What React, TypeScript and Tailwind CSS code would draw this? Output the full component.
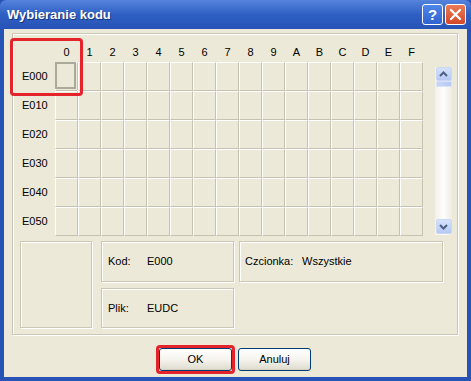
import React from "react";

const cols = ["0", "1", "2", "3", "4", "5", "6", "7", "8", "9", "A", "B", "C", "D", "E", "F"];
const rows = ["E000", "E010", "E020", "E030", "E040", "E050"];

function Etched({ className, children }: { className?: string; children?: React.ReactNode }) {
  return (
    <div
      className={
        "border border-[#cbc7b5] shadow-[inset_1px_1px_0_#ffffff,1px_1px_0_#ffffff] " + (className ?? "")
      }
    >
      {children}
    </div>
  );
}

function XPButton({ label, focus }: { label: string; focus?: boolean }) {
  return (
    <div className="relative">
      <div className="w-[73px] h-[23px] rounded-[3px] border border-[#003c74] bg-gradient-to-b from-[#ffffff] via-[#f5f4ee] to-[#dedbcd] flex items-center justify-center text-[11px] text-black shadow-[inset_0_-1px_0_#d6d0c0]">
        {label}
      </div>
      {focus && (
        <div className="absolute -left-[3px] -top-[3px] w-[79px] h-[29px] rounded-[4px] border-[3px] border-[#e5232b]" />
      )}
    </div>
  );
}

export default function App() {
  return (
    <div className="w-[471px] h-[381px] flex flex-col bg-[#2753b6] font-['Liberation_Sans',Arial,sans-serif] text-black">
      {/* Title bar */}
      <div className="h-[29px] flex items-center pl-[7px] pr-[5px] bg-gradient-to-b from-[#5583dc] via-[#2f5fc3] to-[#2753b6] rounded-t-[6px]">
        <div className="flex-1 text-white font-bold text-[13px] [text-shadow:1px_1px_0_#17367a]">Wybieranie kodu</div>
        <div className="flex gap-[2px]">
          <div className="w-[21px] h-[21px] rounded-[3px] border border-white bg-gradient-to-b from-[#4f86ea] to-[#2f62cf] flex items-center justify-center text-white font-bold text-[15px] leading-none">
            ?
          </div>
          <div className="w-[21px] h-[21px] rounded-[3px] border border-white bg-gradient-to-b from-[#ec7a55] to-[#d2472a] flex items-center justify-center">
            <svg width="13" height="13" viewBox="0 0 13 13">
              <path d="M2 2 L11 11 M11 2 L2 11" stroke="white" strokeWidth="2.2" strokeLinecap="round" />
            </svg>
          </div>
        </div>
      </div>

      {/* Body */}
      <div className="flex-1 mx-[4px] mb-[4px] bg-[#ece9d8] flex flex-col">
        <Etched className="relative ml-[8px] mt-[4px] w-[446px] h-[302px] flex flex-col">
          {/* header digits */}
          <div className="flex h-[28px] pl-[42px]">
            {cols.map((c) => (
              <div key={c} className="w-[23px] text-center text-[11px] leading-[13px] pt-[12px]">
                {c}
              </div>
            ))}
          </div>
          {/* grid area */}
          <div className="flex">
            <div className="flex flex-col w-[42px]">
              {rows.map((r) => (
                <div key={r} className="h-[29px] flex items-center pl-[9px] text-[11px]">
                  {r}
                </div>
              ))}
            </div>
            <div className="flex flex-col">
              {rows.map((r, ri) => (
                <div key={r} className="flex">
                  {cols.map((c, ci) => (
                    <div
                      key={c}
                      className="relative w-[23px] h-[29px] border-l border-t border-l-white border-t-white border-r border-b border-r-[#c5c2b2] border-b-[#c5c2b2]"
                    >
                      {ri === 0 && ci === 0 && (
                        <>
                          <div className="absolute left-[-1px] top-[-1px] w-[21px] h-[27px] border-2 border-[#aba99b]" />
                          <div className="absolute right-[-2px] bottom-[-2px] w-[2px] h-[2px] bg-white" />
                        </>
                      )}
                    </div>
                  ))}
                </div>
              ))}
            </div>
            {/* scrollbar */}
            <div className="ml-[12px] mt-[5px] w-[17px] h-[168px] flex flex-col bg-gradient-to-r from-[#f3f1ea] via-[#fdfdfb] to-[#eeede5]">
              <div className="mx-auto w-[16px] h-[14px] rounded-[2px] bg-gradient-to-b from-[#d6e2fb] to-[#b5c9f3] border border-[#c9d7f5] flex items-center justify-center">
                <svg width="9" height="6" viewBox="0 0 9 6">
                  <path d="M1 5 L4.5 1.5 L8 5" stroke="#4d6185" strokeWidth="2" fill="none" />
                </svg>
              </div>
              <div className="mx-auto w-[16px] h-[6px] rounded-[1px] bg-gradient-to-r from-[#c8d6f7] to-[#b7c9f2] border border-[#d8e2f8]" />
              <div className="flex-1" />
              <div className="mx-auto mb-[1px] w-[16px] h-[15px] rounded-[2px] bg-gradient-to-b from-[#d6e2fb] to-[#b5c9f3] border border-[#c9d7f5] flex items-center justify-center">
                <svg width="9" height="6" viewBox="0 0 9 6">
                  <path d="M1 1 L4.5 4.5 L8 1" stroke="#4d6185" strokeWidth="2" fill="none" />
                </svg>
              </div>
            </div>
          </div>

          {/* bottom boxes */}
          <div className="flex items-start mt-[5px] pl-[7px]">
            <Etched className="w-[72px] h-[87px]" />
            <div className="flex flex-col ml-[9px]">
              <Etched className="w-[133px] h-[41px] flex items-center pl-[6px] text-[11px]">
                <span className="w-[39px]">Kod:</span>
                <span>E000</span>
              </Etched>
              <Etched className="w-[133px] h-[40px] mt-[6px] flex items-center pl-[6px] text-[11px]">
                <span className="w-[39px]">Plik:</span>
                <span>EUDC</span>
              </Etched>
            </div>
            <Etched className="ml-[5px] w-[204px] h-[41px] flex items-center pl-[5px] text-[11px]">
              <span className="w-[57px]">Czcionka:</span>
              <span>Wszystkie</span>
            </Etched>
          </div>

          {/* red annotation on top-left */}
          <div className="absolute left-[-3px] top-[4px] w-[73px] h-[58px] rounded-[4px] border-[3px] border-[#e5232b]" />
        </Etched>

        <div className="flex mt-[13px] pl-[155px] gap-[6px]">
          <XPButton label="OK" focus />
          <XPButton label="Anuluj" />
        </div>
      </div>
    </div>
  );
}
